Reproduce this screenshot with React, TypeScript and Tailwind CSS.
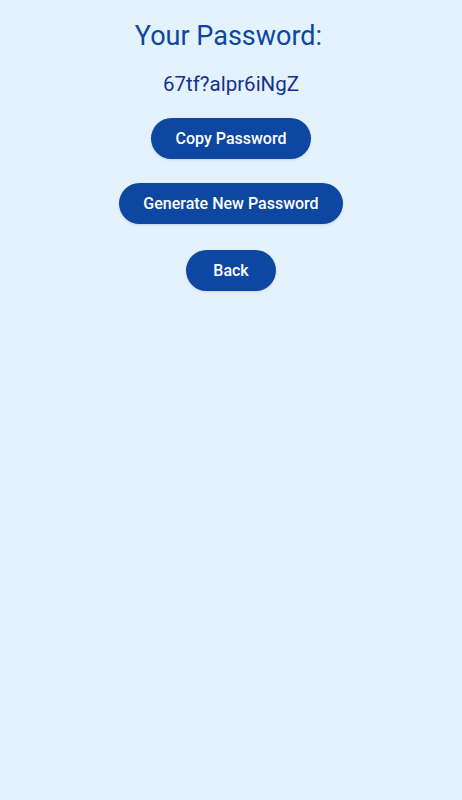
export default function App() {
  return (
    <div
      className="flex min-h-screen flex-col items-center bg-[#e3f2fd] pt-4"
      style={{ fontFamily: "Roboto, 'Liberation Sans', sans-serif" }}
    >
      <h1 className="pr-[5px] text-[27px] leading-10 text-[#0d47a1]">Your Password:</h1>
      <p className="mt-[14px] text-[20.5px] leading-7 text-[#15318f]">67tf?alpr6iNgZ</p>
      <button className="mt-5 h-[41px] rounded-full bg-[#0d47a1] px-[25px] text-base font-medium text-white shadow-sm">
        Copy Password
      </button>
      <button className="mt-6 h-[41px] rounded-full bg-[#0d47a1] px-6 text-base font-medium text-white shadow-sm">
        Generate New Password
      </button>
      <button className="mt-[26px] h-[41px] rounded-full bg-[#0d47a1] px-[27px] text-base font-medium text-white shadow-sm">
        Back
      </button>
    </div>
  );
}
